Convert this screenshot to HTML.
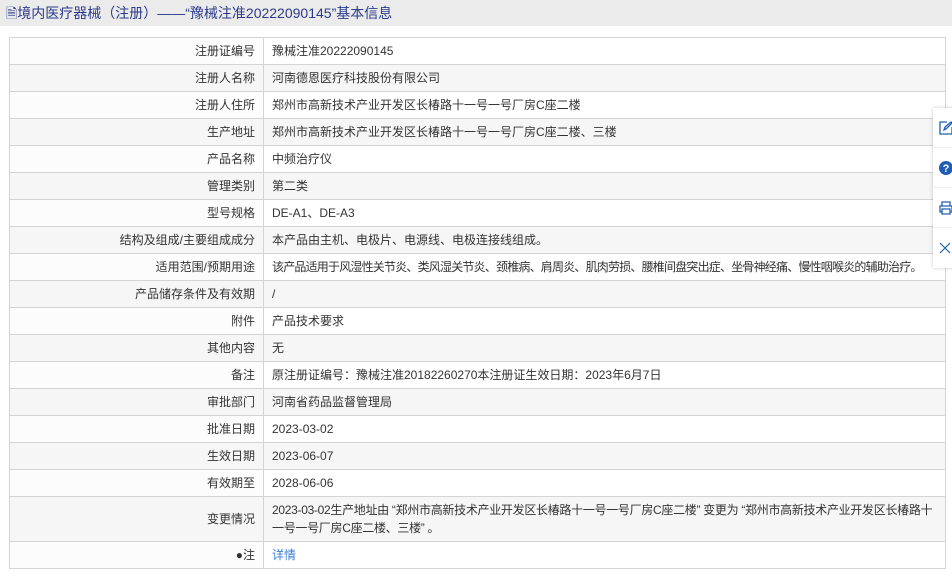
<!DOCTYPE html>
<html><head><meta charset="utf-8"><style>
body{margin:0;width:952px;height:578px;overflow:hidden;background:#fff;font-family:"Liberation Sans","Noto Sans CJK SC",sans-serif;font-size:12px;color:#333}
.hd{height:26px;background:#ebebeb;color:#2b3a8a;font-size:14px;line-height:26px;padding-left:6px}
table{position:absolute;left:9px;top:37px;width:937px;border-collapse:collapse;table-layout:fixed}
td{border:1px solid #d4d4d4;height:26px;padding:0 8px;line-height:18px;white-space:nowrap;overflow:hidden}
td.l{text-align:right;background:#fcfcfc}
tr:nth-child(even) td{background:#f6f6f6}
.side{position:absolute;left:933px;top:108px;width:30px;height:160px;background:#fff;box-shadow:0 0 4px rgba(0,0,0,.2)}
.side div{height:39px;border-bottom:1px solid #eee;padding-left:6px;display:flex;align-items:center}
a{color:#3a7fd9;text-decoration:none}
</style></head><body>
<div class="hd">🗎境内医疗器械（注册）——“豫械注准20222090145”基本信息</div>
<table>
<colgroup><col style="width:254px"><col></colgroup>
<tr><td class="l">注册证编号</td><td>豫械注准20222090145</td></tr>
<tr><td class="l">注册人名称</td><td>河南德恩医疗科技股份有限公司</td></tr>
<tr><td class="l">注册人住所</td><td>郑州市高新技术产业开发区长椿路十一号一号厂房C座二楼</td></tr>
<tr><td class="l">生产地址</td><td>郑州市高新技术产业开发区长椿路十一号一号厂房C座二楼、三楼</td></tr>
<tr><td class="l">产品名称</td><td>中频治疗仪</td></tr>
<tr><td class="l">管理类别</td><td>第二类</td></tr>
<tr><td class="l">型号规格</td><td>DE-A1、DE-A3</td></tr>
<tr><td class="l">结构及组成/主要组成成分</td><td>本产品由主机、电极片、电源线、电极连接线组成。</td></tr>
<tr><td class="l">适用范围/预期用途</td><td style="letter-spacing:-0.8px">该产品适用于风湿性关节炎、类风湿关节炎、颈椎病、肩周炎、肌肉劳损、腰椎间盘突出症、坐骨神经痛、慢性咽喉炎的辅助治疗。</td></tr>
<tr><td class="l">产品储存条件及有效期</td><td>/</td></tr>
<tr><td class="l">附件</td><td>产品技术要求</td></tr>
<tr><td class="l">其他内容</td><td>无</td></tr>
<tr><td class="l">备注</td><td>原注册证编号：豫械注准20182260270本注册证生效日期：2023年6月7日</td></tr>
<tr><td class="l">审批部门</td><td>河南省药品监督管理局</td></tr>
<tr><td class="l">批准日期</td><td>2023-03-02</td></tr>
<tr><td class="l">生效日期</td><td>2023-06-07</td></tr>
<tr><td class="l">有效期至</td><td>2028-06-06</td></tr>
<tr><td class="l" style="height:44px">变更情况</td><td style="letter-spacing:-0.3px">2023-03-02生产地址由 “郑州市高新技术产业开发区长椿路十一号一号厂房C座二楼” 变更为 “郑州市高新技术产业开发区长椿路十<br>一号一号厂房C座二楼、三楼” 。</td></tr>
<tr><td class="l">●注</td><td><a>详情</a></td></tr>
</table>
<div class="side">
<div><svg width="14" height="14" viewBox="0 0 14 14" fill="none" stroke="#1e5fb4" stroke-width="1.3"><path d="M8 1H1v12h12V6"/><path d="M5 9l1-3 6-5 1 1-6 6z"/></svg></div>
<div><svg width="14" height="14" viewBox="0 0 14 14"><circle cx="7" cy="7" r="7" fill="#1e5fb4"/><text x="7" y="11" font-size="11" font-weight="bold" fill="#fff" text-anchor="middle" font-family="Liberation Sans">?</text></svg></div>
<div><svg width="14" height="14" viewBox="0 0 14 14" fill="none" stroke="#1e5fb4" stroke-width="1.3"><path d="M3 5V1h8v4M3 11H1V5h12v6h-2M3 8h8v5H3z"/></svg></div>
<div style="border:0"><svg width="12" height="12" viewBox="0 0 12 12" stroke="#1e5fb4" stroke-width="1.2"><path d="M1 1l10 10M11 1L1 11"/></svg></div>
</div>
</body></html>
